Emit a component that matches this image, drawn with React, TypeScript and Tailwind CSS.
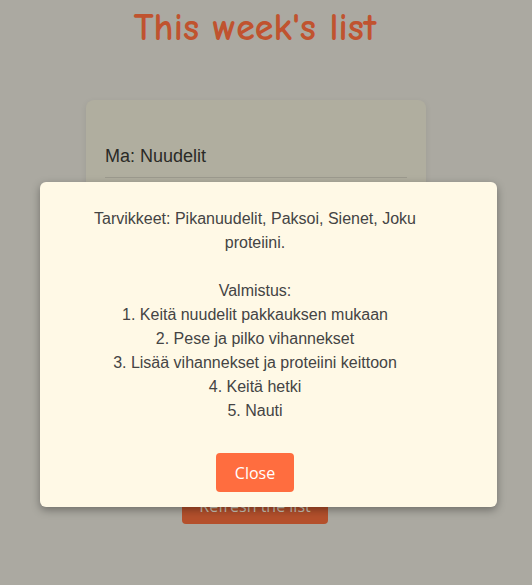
export default function App() {
  return (
    <div className="relative min-h-[585px] w-full bg-[#aba9a1] font-['Liberation_Sans',Arial,sans-serif]">
      <h1 className="pt-[6px] pr-[22px] text-center text-[38px] font-black leading-[44px] text-[#c0532f] font-['Comic_Sans_MS','Comic_Neue',cursive]">
        This week's list
      </h1>

      <div className="ml-[86px] mt-[50px] w-[340px] rounded-lg bg-[#b0ae9f] px-[19px] pt-[45px] pb-[300px] shadow-[0_2px_6px_rgba(0,0,0,0.08)]">
        <div className="border-b border-[#9c9a8e] pb-[10px] text-[18px] leading-[22px] text-[#2a2a26]">
          Ma: Nuudelit
        </div>
      </div>

      <div className="absolute left-[182px] top-[496px] flex h-[28px] w-[146px] items-end justify-center rounded-[4px] bg-[#b4502c] pb-[6px] font-['Open_Sans',sans-serif] text-[16px] text-[#c9c3b6]">
        Refresh the list
      </div>

      {/* modal */}
      <div className="absolute left-[40px] top-[182px] w-[457px] rounded-md bg-[#fff9e6] pl-[25px] pr-[52px] pt-[25px] pb-[15px] text-center shadow-[0_3px_8px_rgba(0,0,0,0.35)]">
        <p className="whitespace-pre-line text-[16px] leading-[24px] text-[#444]">
          {`Tarvikkeet: Pikanuudelit, Paksoi, Sienet, Joku proteiini.

Valmistus:
1. Keitä nuudelit pakkauksen mukaan
2. Pese ja pilko vihannekset
3. Lisää vihannekset ja proteiini keittoon
4. Keitä hetki
5. Nauti`}
        </p>
        <button className="mt-[30px] h-[39px] w-[78px] rounded-[4px] bg-[#ff6d3f] font-['Open_Sans',sans-serif] text-[16px] text-white">
          Close
        </button>
      </div>
    </div>
  );
}
